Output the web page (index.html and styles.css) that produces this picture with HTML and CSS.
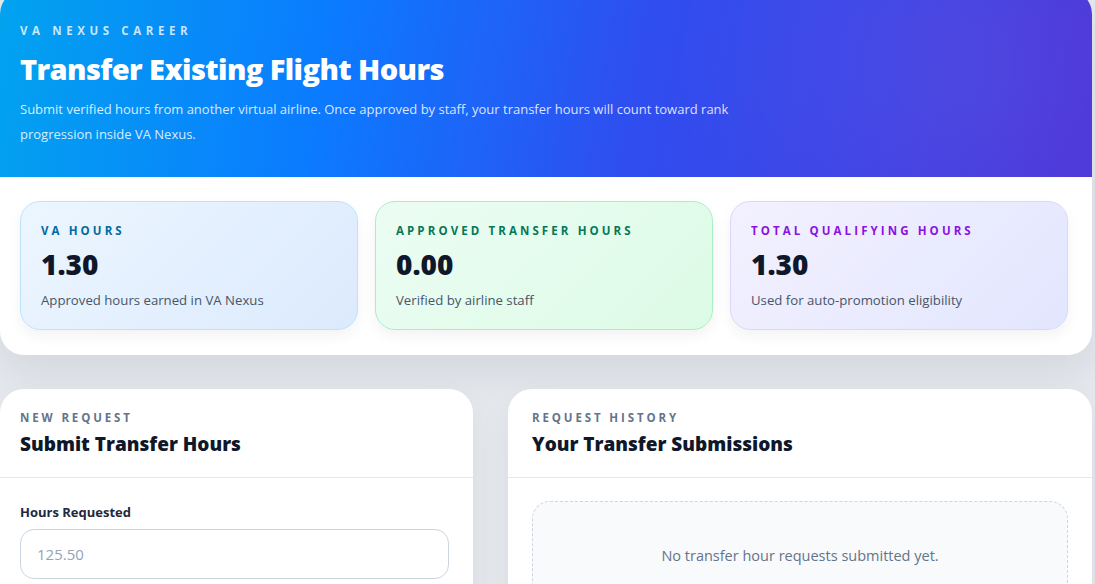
FILE: index.html
```html
<!DOCTYPE html>
<html lang="en">
<head>
    <meta charset="UTF-8">
    <meta name="viewport" content="width=device-width, initial-scale=1.0">
    <title>Transfer Flight Hours - VA Nexus</title>
    <link rel="stylesheet" href="styles.css">
</head>
<body>
    <div class="page">
        <section class="overview">
            <header class="hero">
                <div class="eyebrow">VA Nexus Career</div>
                <h1>Transfer Existing Flight Hours</h1>
                <p>Submit verified hours from another virtual airline. Once approved by staff, your transfer hours will count toward rank progression inside VA Nexus.</p>
            </header>

            <div class="stats">
                <div class="stat stat-blue">
                    <div class="stat-label">VA Hours</div>
                    <div class="stat-value">1.30</div>
                    <div class="stat-note">Approved hours earned in VA Nexus</div>
                </div>
                <div class="stat stat-green">
                    <div class="stat-label">Approved Transfer Hours</div>
                    <div class="stat-value">0.00</div>
                    <div class="stat-note">Verified by airline staff</div>
                </div>
                <div class="stat stat-purple">
                    <div class="stat-label">Total Qualifying Hours</div>
                    <div class="stat-value">1.30</div>
                    <div class="stat-note">Used for auto-promotion eligibility</div>
                </div>
            </div>
        </section>

        <div class="columns">
            <section class="panel">
                <div class="panel-head">
                    <div class="panel-kicker">New Request</div>
                    <h2>Submit Transfer Hours</h2>
                </div>
                <form class="panel-body">
                    <label class="field-label" for="hours">Hours Requested</label>
                    <input class="field" id="hours" type="text" placeholder="125.50">
                </form>
            </section>

            <section class="panel">
                <div class="panel-head">
                    <div class="panel-kicker">Request History</div>
                    <h2>Your Transfer Submissions</h2>
                </div>
                <div class="panel-body">
                    <div class="empty">No transfer hour requests submitted yet.</div>
                </div>
            </section>
        </div>
    </div>
</body>
</html>
```

FILE: styles.css
```css
body {
    margin: 0;
    background: #e5e8ed;
    font-family: "Open Sans", "Noto Sans", sans-serif;
    color: #0f172a;
    overflow: hidden;
}

.page {
    margin-top: -10px;
    padding-right: 3px;
}

.overview {
    background: #fff;
    border-radius: 24px;
    overflow: hidden;
    box-shadow: 0 18px 40px rgba(15, 23, 42, 0.08);
}

.hero {
    padding: 33px 20px 30px;
    color: #fff;
    background:
        radial-gradient(circle at 88% 40%, rgba(255, 255, 255, 0.06), transparent 30%),
        linear-gradient(100deg, #02a3ef 0%, #0b7bff 30%, #2f4ef0 58%, #4b34d8 100%);
}

.eyebrow {
    font-size: 11.5px;
    font-weight: 700;
    letter-spacing: 0.4em;
    text-transform: uppercase;
    color: rgba(255, 255, 255, 0.78);
}

.hero h1 {
    margin: 14px 0 10px;
    font-size: 29px;
    font-weight: 800;
    letter-spacing: -0.02em;
    line-height: 1.2;
}

.hero p {
    margin: 0;
    max-width: 740px;
    font-size: 13px;
    line-height: 25px;
    color: rgba(255, 255, 255, 0.85);
}

.stats {
    display: grid;
    grid-template-columns: repeat(3, 1fr);
    gap: 17px;
    padding: 24px 24px 25px 20px;
}

.stat {
    height: 129px;
    box-sizing: border-box;
    padding: 21px 20px 0;
    border: 1px solid;
    border-radius: 20px;
    box-shadow: 0 6px 14px rgba(15, 23, 42, 0.05);
}

.stat-blue {
    background: linear-gradient(135deg, #ecf6ff, #dceafd);
    border-color: #bde3fb;
}

.stat-green {
    background: linear-gradient(135deg, #ecfdf3, #dcfbe6);
    border-color: #a9eec9;
}

.stat-purple {
    background: linear-gradient(135deg, #f3f1ff, #e2e6fe);
    border-color: #dcd6fa;
}

.stat-label {
    font-size: 11.5px;
    font-weight: 700;
    letter-spacing: 0.27em;
    text-transform: uppercase;
}

.stat-blue .stat-label { color: #0369a1; }
.stat-green .stat-label { color: #047857; }
.stat-purple .stat-label { color: #8a12e0; }

.stat-value {
    margin: 10px 0 10px;
    font-size: 28px;
    font-weight: 800;
    line-height: 1.2;
    color: #0f172a;
}

.stat-note {
    font-size: 13.2px;
    color: #475569;
}

.columns {
    display: grid;
    grid-template-columns: 0.81fr 1fr;
    gap: 35px;
    margin-top: 34px;
}

.panel {
    background: #fff;
    border-radius: 24px;
    box-shadow: 0 14px 34px rgba(15, 23, 42, 0.06);
    min-height: 240px;
}

.panel-head {
    padding: 21px 24px 21px;
    border-bottom: 1px solid #e2e8f0;
}

.panel:first-child .panel-head,
.panel:first-child .panel-body {
    padding-left: 20px;
    padding-right: 24px;
}

.panel-kicker {
    font-size: 11.5px;
    font-weight: 700;
    letter-spacing: 0.25em;
    text-transform: uppercase;
    color: #64748b;
}

.panel-head h2 {
    margin: 7px 0 0;
    font-size: 19px;
    font-weight: 800;
    line-height: 1.3;
}

.panel-body {
    padding: 23px 24px 24px;
}

.field-label {
    display: block;
    margin: 2px 0 8px;
    font-size: 13px;
    font-weight: 700;
    color: #1e293b;
}

.field {
    display: block;
    width: 100%;
    box-sizing: border-box;
    height: 50px;
    padding: 0 16px;
    border: 1px solid #cbd5e1;
    border-radius: 14px;
    font-family: inherit;
    font-size: 15px;
    color: #0f172a;
}

.field::placeholder {
    color: #94a3b8;
}

.empty {
    padding: 44px 20px;
    border: 1px dashed #c9d6e3;
    border-radius: 18px;
    background: #f8fafc;
    text-align: center;
    font-size: 14.5px;
    color: #64748b;
}
```
